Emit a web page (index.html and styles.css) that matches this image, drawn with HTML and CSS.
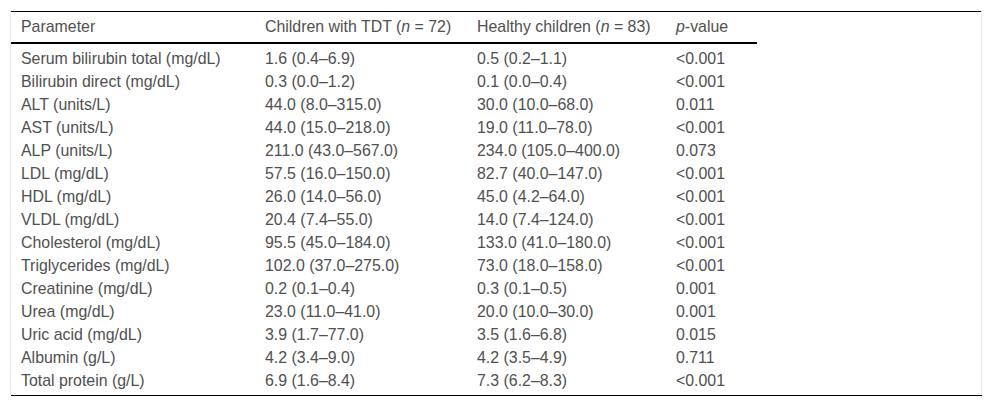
FILE: index.html
```html
<!DOCTYPE html>
<html lang="en">
<head>
<meta charset="utf-8">
<title>Table</title>
<link rel="stylesheet" href="styles.css">
</head>
<body>
<div class="frame">
  <div class="table-box">
    <table class="data">
      <colgroup>
        <col class="c1"><col class="c2"><col class="c3"><col class="c4">
      </colgroup>
      <thead>
        <tr>
          <th>Parameter</th>
          <th>Children with TDT (<i>n</i> = 72)</th>
          <th>Healthy children (<i>n</i> = 83)</th>
          <th><i>p</i>-value</th>
        </tr>
      </thead>
      <tbody>
        <tr><td>Serum bilirubin total (mg/dL)</td><td>1.6 (0.4–6.9)</td><td>0.5 (0.2–1.1)</td><td>&lt;0.001</td></tr>
        <tr><td>Bilirubin direct (mg/dL)</td><td>0.3 (0.0–1.2)</td><td>0.1 (0.0–0.4)</td><td>&lt;0.001</td></tr>
        <tr><td>ALT (units/L)</td><td>44.0 (8.0–315.0)</td><td>30.0 (10.0–68.0)</td><td>0.011</td></tr>
        <tr><td>AST (units/L)</td><td>44.0 (15.0–218.0)</td><td>19.0 (11.0–78.0)</td><td>&lt;0.001</td></tr>
        <tr><td>ALP (units/L)</td><td>211.0 (43.0–567.0)</td><td>234.0 (105.0–400.0)</td><td>0.073</td></tr>
        <tr><td>LDL (mg/dL)</td><td>57.5 (16.0–150.0)</td><td>82.7 (40.0–147.0)</td><td>&lt;0.001</td></tr>
        <tr><td>HDL (mg/dL)</td><td>26.0 (14.0–56.0)</td><td>45.0 (4.2–64.0)</td><td>&lt;0.001</td></tr>
        <tr><td>VLDL (mg/dL)</td><td>20.4 (7.4–55.0)</td><td>14.0 (7.4–124.0)</td><td>&lt;0.001</td></tr>
        <tr><td>Cholesterol (mg/dL)</td><td>95.5 (45.0–184.0)</td><td>133.0 (41.0–180.0)</td><td>&lt;0.001</td></tr>
        <tr><td>Triglycerides (mg/dL)</td><td>102.0 (37.0–275.0)</td><td>73.0 (18.0–158.0)</td><td>&lt;0.001</td></tr>
        <tr><td>Creatinine (mg/dL)</td><td>0.2 (0.1–0.4)</td><td>0.3 (0.1–0.5)</td><td>0.001</td></tr>
        <tr><td>Urea (mg/dL)</td><td>23.0 (11.0–41.0)</td><td>20.0 (10.0–30.0)</td><td>0.001</td></tr>
        <tr><td>Uric acid (mg/dL)</td><td>3.9 (1.7–77.0)</td><td>3.5 (1.6–6.8)</td><td>0.015</td></tr>
        <tr><td>Albumin (g/L)</td><td>4.2 (3.4–9.0)</td><td>4.2 (3.5–4.9)</td><td>0.711</td></tr>
        <tr><td>Total protein (g/L)</td><td>6.9 (1.6–8.4)</td><td>7.3 (6.2–8.3)</td><td>&lt;0.001</td></tr>
      </tbody>
    </table>
  </div>
</div>
<div class="bottom-rule"></div>
</body>
</html>
```

FILE: styles.css
```css
html, body {
  margin: 0;
  padding: 0;
  background: #fff;
}

body {
  font-family: "Liberation Sans", Arial, sans-serif;
  font-size: 15.9px;
  color: #505050;
}

.frame {
  margin: 11px 0 0 10px;
  width: 970px;
  border-left: 1px solid #ebebeb;
  border-right: 1px solid #ebebeb;
}

.table-box {
  border-top: 1px solid #000;
  padding-bottom: 3px;
}

.data {
  border-collapse: collapse;
  table-layout: fixed;
  width: 746px;
}

.c1 { width: 244px; }
.c2 { width: 212px; }
.c3 { width: 199px; }
.c4 { width: 91px; }

.data th {
  font-weight: normal;
  text-align: left;
  height: 31px;
  padding: 0 10px;
  line-height: 18px;
  vertical-align: middle;
  border-bottom: 2px solid #000;
  box-sizing: border-box;
}

.data td {
  padding: 0 10px;
  height: 23px;
  line-height: 18px;
  vertical-align: middle;
  white-space: nowrap;
}

.data tbody tr:first-child td {
  padding-top: 3px;
}

.bottom-rule {
  margin-left: 11px;
  width: 971px;
  height: 1px;
  background: #000;
}
```
